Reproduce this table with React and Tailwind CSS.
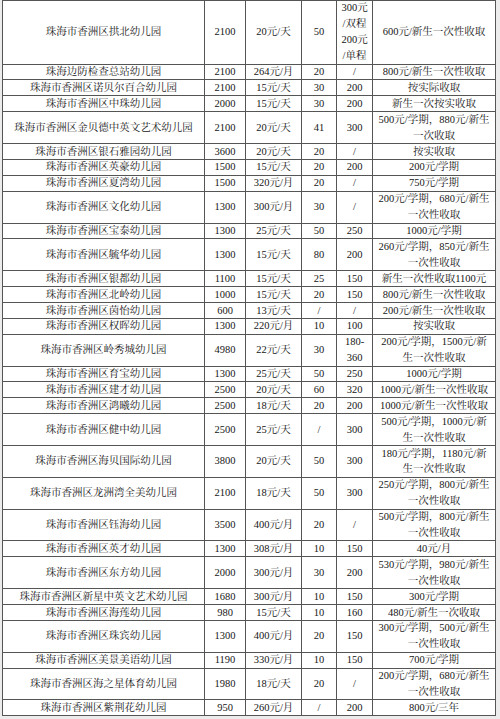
import React from "react";

const rows = [
  [4, "珠海市香洲区拱北幼儿园", "2100", "20元/天", "50", ["300元", "/双程", "200元", "/单程"], ["600元/新生一次性收取"]],
  [1, "珠海边防检查总站幼儿园", "2100", "264元/月", "20", ["/"], ["800元/新生一次性收取"]],
  [1, "珠海市香洲区诺贝尔百合幼儿园", "2100", "15元/天", "30", ["200"], ["按实际收取"]],
  [1, "珠海市香洲区中珠幼儿园", "2000", "15元/天", "30", ["200"], ["新生一次按实收取"]],
  [2, "珠海市香洲区金贝德中英文艺术幼儿园", "2100", "20元/天", "41", ["300"], ["500元/学期，880元/新生", "一次收取"]],
  [1, "珠海市香洲区银石雅园幼儿园", "3600", "20元/天", "20", ["/"], ["按实收取"]],
  [1, "珠海市香洲区英豪幼儿园", "1500", "15元/天", "20", ["200"], ["200元/学期"]],
  [1, "珠海市香洲区夏湾幼儿园", "1500", "320元/月", "20", ["/"], ["750元/学期"]],
  [2, "珠海市香洲区文化幼儿园", "1300", "300元/月", "30", ["/"], ["200元/学期，680元/新生", "一次性收取"]],
  [1, "珠海市香洲区宝泰幼儿园", "1300", "25元/天", "50", ["250"], ["1000元/学期"]],
  [2, "珠海市香洲区毓华幼儿园", "1300", "15元/天", "80", ["200"], ["260元/学期，850元/新生", "一次性收取"]],
  [1, "珠海市香洲区银都幼儿园", "1100", "15元/天", "25", ["150"], ["新生一次性收取1100元"]],
  [1, "珠海市香洲区北岭幼儿园", "1000", "15元/天", "20", ["150"], ["800元/新生一次性收取"]],
  [1, "珠海市香洲区茵怡幼儿园", "600", "13元/天", "/", ["/"], ["200元/新生一次性收取"]],
  [1, "珠海市香洲区权晖幼儿园", "1300", "220元/月", "10", ["100"], ["按实收取"]],
  [2, "珠海市香洲区岭秀城幼儿园", "4980", "22元/天", "30", ["180-", "360"], ["200元/学期，1500元/新", "生一次性收取"]],
  [1, "珠海市香洲区育宝幼儿园", "1300", "25元/天", "50", ["250"], ["1000元/学期"]],
  [1, "珠海市香洲区建才幼儿园", "2500", "20元/天", "60", ["320"], ["1000元/新生一次性收取"]],
  [1, "珠海市香洲区鸿曦幼儿园", "2500", "18元/天", "20", ["200"], ["1000元/新生一次性收取"]],
  [2, "珠海市香洲区健中幼儿园", "2500", "25元/天", "/", ["300"], ["500元/学期，1000元/新", "生一次性收取"]],
  [2, "珠海市香洲区海贝国际幼儿园", "3800", "20元/天", "50", ["300"], ["180元/学期，1180元/新", "生一次性收取"]],
  [2, "珠海市香洲区龙洲湾全美幼儿园", "2100", "18元/天", "50", ["300"], ["250元/学期，800元/新生", "一次性收取"]],
  [2, "珠海市香洲区钰海幼儿园", "3500", "400元/月", "20", ["/"], ["500元/学期，800元/新生", "一次性收取"]],
  [1, "珠海市香洲区英才幼儿园", "1300", "308元/月", "10", ["150"], ["40元/月"]],
  [2, "珠海市香洲区东方幼儿园", "2000", "300元/月", "30", ["200"], ["530元/学期，980元/新生", "一次性收取"]],
  [1, "珠海市香洲区新星中英文艺术幼儿园", "1680", "300元/月", "10", ["150"], ["300元/学期"]],
  [1, "珠海市香洲区海莲幼儿园", "980", "15元/天", "10", ["160"], ["480元/新生一次收取"]],
  [2, "珠海市香洲区珠宾幼儿园", "1300", "400元/月", "20", ["150"], ["300元/学期，500元/新生", "一次性收取"]],
  [1, "珠海市香洲区美景美语幼儿园", "1190", "330元/月", "10", ["150"], ["700元/学期"]],
  [2, "珠海市香洲区海之星体育幼儿园", "1980", "18元/天", "20", ["/"], ["200元/学期，680元/新生", "一次性收取"]],
  [1, "珠海市香洲区紫荆花幼儿园", "950", "260元/月", "/", ["200"], ["800元/三年"]],
];

const heights = { 1: "h-[15.9px]", 2: "h-[31.8px]", 4: "h-[63.6px]" };

function Cell({ children, last }) {
  return (
    <div
      className={
        "flex flex-col items-center justify-center text-center whitespace-nowrap overflow-hidden " +
        (last ? "" : "border-r border-[#555555]")
      }
    >
      {children}
    </div>
  );
}

function Lines({ lines }) {
  return lines.map((l, i) => <span key={i}>{l}</span>);
}

export default function App() {
  return (
    <div className="w-[500px] h-[719px] overflow-hidden bg-[#ececec]">
      <div className="ml-[2px] w-[494px] bg-white border-t border-l border-r border-[#555555] text-[10.5px] leading-[15.9px] text-[#161616] font-['Liberation_Serif','Noto_Serif_CJK_SC','Noto_Sans_CJK_SC',serif]">
        {rows.map((r, i) => (
          <div
            key={i}
            className={
              "grid grid-cols-[202px_41px_56px_35px_36px_1fr] border-b border-[#555555] " +
              heights[r[0]]
            }
          >
            <Cell>{r[1]}</Cell>
            <Cell>{r[2]}</Cell>
            <Cell>{r[3]}</Cell>
            <Cell>{r[4]}</Cell>
            <Cell>
              <Lines lines={r[5]} />
            </Cell>
            <Cell last>
              <Lines lines={r[6]} />
            </Cell>
          </div>
        ))}
      </div>
    </div>
  );
}
